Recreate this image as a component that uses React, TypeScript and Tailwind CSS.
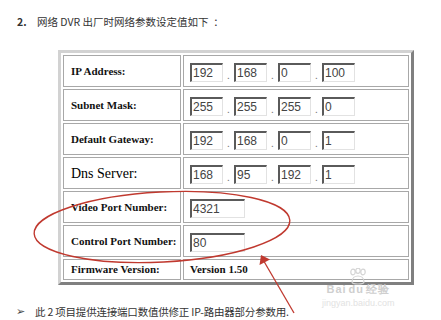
import React from "react";

type Row = {
  label: string;
  big?: boolean;
  ip?: string[];
  port?: string;
  text?: string;
};

const rows: Row[] = [
  { label: "IP Address:", ip: ["192", "168", "0", "100"] },
  { label: "Subnet Mask:", ip: ["255", "255", "255", "0"] },
  { label: "Default Gateway:", ip: ["192", "168", "0", "1"] },
  { label: "Dns Server:", big: true, ip: ["168", "95", "192", "1"] },
  { label: "Video Port Number:", port: "4321" },
  { label: "Control Port Number:", port: "80" },
  { label: "Firmware Version:", text: "Version 1.50" },
];

function Box({ value, wide }: { value: string; wide?: boolean }) {
  return (
    <div
      className={`${wide ? "w-[55px]" : "w-[33px]"} h-[19px] border-t-2 border-l-2 border-r border-b border-t-[#5a5a5a] border-l-[#5a5a5a] border-r-[#e2e2e2] border-b-[#e2e2e2] bg-white pl-px text-[12px] leading-[16px] text-[#444] font-['Liberation_Sans',Arial,sans-serif]`}
    >
      {value}
    </div>
  );
}

function Watermark() {
  return (
    <div className="absolute left-[322px] top-[268px] flex flex-col items-center pointer-events-none">
      <svg width="22" height="17" viewBox="0 0 22 17" fill="none" stroke="#d4d4d4" strokeWidth="1.2">
        <ellipse cx="6" cy="4" rx="2.2" ry="2.8" />
        <ellipse cx="11" cy="2.8" rx="2.2" ry="2.6" />
        <ellipse cx="16" cy="4" rx="2.2" ry="2.8" />
        <path d="M5 14c0-4 3-6 6-6s6 2 6 6c0 2-3 2-6 2s-6 0-6-2z" />
      </svg>
      <div className="-mt-[1px] text-[11px] leading-[11px] font-bold tracking-[1px] text-[#cfcfcf] font-['Liberation_Sans',sans-serif]">
        Bai<span className="mx-[2px]">du</span>经验
      </div>
      <div className="mt-[3px] text-[9px] leading-[10px] text-[#e2e2e2] font-['Liberation_Sans',sans-serif]">
        jingyan.baidu.com
      </div>
    </div>
  );
}

export default function App() {
  return (
    <div className="relative w-[441px] h-[320px] overflow-hidden bg-white text-[#333] font-['Noto_Sans_CJK_SC','Noto_Sans',sans-serif]">
      {/* heading */}
      <div className="flex items-center pt-[15px] pl-[17px] h-[29px] text-[10.5px] leading-[14px]">
        <span className="w-[20px] font-bold">2.</span>
        <span>网络 DVR 出厂时网络参数设定值如下&nbsp;&nbsp;：</span>
      </div>

      {/* settings table */}
      <div className="ml-[58px] mt-[21px] w-[356px] border-[3px] border-t-[#d2d2d2] border-l-[#d2d2d2] border-r-[#808080] border-b-[#808080] bg-white p-[2px]">
        <div className="flex flex-col gap-[2px]">
          {rows.map((r, i) => (
            <div
              key={r.label}
              className={`flex gap-[2px] ${i === rows.length - 1 ? "h-[21px]" : "h-[32px]"}`}
            >
              <div className="w-[118px] flex items-center border border-[#a8a8a8] pl-[7px] text-[#111] font-['Liberation_Serif','Times_New_Roman',serif]">
                {r.big ? (
                  <span className="text-[14px] text-black">{r.label}</span>
                ) : (
                  <span className="text-[11px] font-bold">{r.label}</span>
                )}
              </div>
              <div className="flex-1 flex items-center border border-[#a8a8a8] pl-[6px]">
                {r.ip && (
                  <div className="flex items-end mt-[2px]">
                    {r.ip.map((v, j) => (
                      <React.Fragment key={j}>
                        {j > 0 && (
                          <span className="w-[11px] text-center text-[10px] leading-[14px] text-[#777]">.</span>
                        )}
                        <Box value={v} />
                      </React.Fragment>
                    ))}
                  </div>
                )}
                {r.port && (
                  <div className="mt-[2px]">
                    <Box value={r.port} wide />
                  </div>
                )}
                {r.text && (
                  <span className="text-[11px] font-bold text-[#111] font-['Liberation_Serif','Times_New_Roman',serif]">
                    {r.text}
                  </span>
                )}
              </div>
            </div>
          ))}
        </div>
      </div>

      {/* note */}
      <div className="flex items-center pl-[16px] mt-[20px] text-[10.5px] leading-[14px]">
        <span className="w-[19px] text-[11px] leading-[14px] text-[#444] font-['DejaVu_Sans',sans-serif]">➢</span>
        <span className="tracking-[-0.2px]">此 2 项目提供连接端口数值供修正 IP-路由器部分参数用.</span>
      </div>

      <Watermark />

      {/* red annotation: circled port rows + pointer */}
      <svg className="absolute left-0 top-0 pointer-events-none" width="441" height="320" viewBox="0 0 441 320">
        <ellipse
          cx="162"
          cy="227"
          rx="128"
          ry="35"
          transform="rotate(-3 162 227)"
          fill="none"
          stroke="#c0392f"
          strokeWidth="1.4"
        />
        <line x1="294" y1="313" x2="262" y2="258" stroke="#c0392f" strokeWidth="1.3" />
        <path d="M261 255 L259.5 265 L270 259.5 Z" fill="#c0392f" />
      </svg>
    </div>
  );
}
